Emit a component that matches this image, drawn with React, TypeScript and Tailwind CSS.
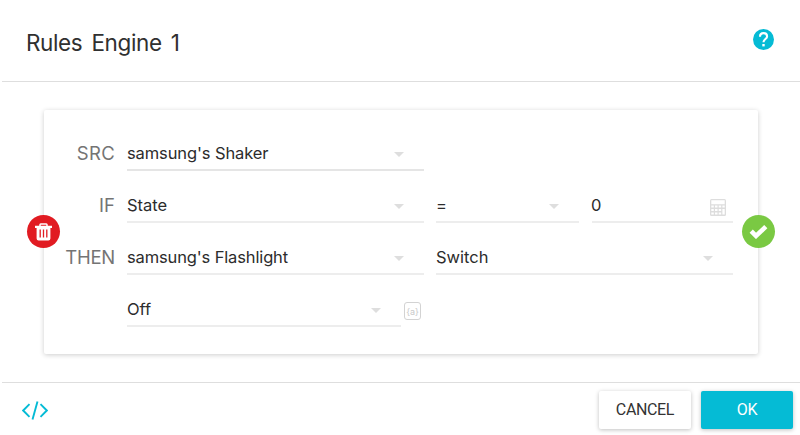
import type { ReactNode } from 'react';

type FieldProps = { text: string; width: string; arrow?: string; tracking?: string; line?: string; children?: ReactNode };

function Field({ text, width, arrow, tracking = '', line = 'border-[#ededed]', children }: FieldProps) {
  return (
    <div className={`flex h-[35px] items-center justify-between border-b-2 ${line} ${width}`}>
      <span className={`text-[16.5px] leading-[20px] whitespace-nowrap text-[#2c2c2c] ${tracking}`}>{text}</span>
      {arrow && (
        <svg className={`mt-[3px] h-[5px] w-[10px] shrink-0 ${arrow}`} viewBox="0 0 10 5" fill="#dedede">
          <path d="M0 0h10L5 5z" />
        </svg>
      )}
      {children}
    </div>
  );
}

function Label({ children, tracking = '' }: { children?: ReactNode; tracking?: string }) {
  return (
    <div className={`mr-[12px] flex h-[33px] w-[71px] items-center justify-end text-[18.5px] leading-[20px] text-[#747474] ${tracking}`}>
      {children}
    </div>
  );
}

export default function App() {
  return (
    <div className="flex h-[435px] w-[800px] flex-col overflow-hidden bg-white pl-[2px] font-['Inter','Liberation_Sans',sans-serif]">
      <header className="flex h-[82px] shrink-0 items-center justify-between border-b border-[#dedede] pr-[26px] pb-px pl-[24px]">
        <h1 className="mt-[5px] text-[22.5px] leading-[28px] tracking-[-0.38px] [word-spacing:3.2px] text-[#303030]">Rules Engine 1</h1>
        <svg className="mb-[2px] size-[21px]" viewBox="0 0 21 21">
          <circle cx="10.5" cy="10.5" r="10.5" fill="#05bbd5" />
          <path d="M7 7.7C7 5.3 8.4 4.1 10.5 4.1s3.6 1.3 3.6 3.3c0 2.5-3.6 2.8-3.6 5.8" fill="none" stroke="#fff" strokeWidth="2.1" />
          <rect x="9.3" y="15" width="2.4" height="2.4" fill="#fff" />
        </svg>
      </header>

      <main className="h-[300px] shrink-0 pt-[28px] pl-[42px]">
        <section className="relative flex h-[244px] w-[714px] flex-col gap-[17px] rounded-[2px] bg-white pt-[26px] shadow-[0_1px_5px_rgba(0,0,0,0.2)]">
          <div className="flex">
            <Label tracking="tracking-[0.3px]">SRC</Label>
            <Field text="samsung's Shaker" width="w-[297px]" arrow="mr-[20px]" line="border-[#e5e5e5]" tracking="tracking-[-0.11px]" />
          </div>
          <div className="flex">
            <Label>IF</Label>
            <Field text="State" width="w-[297px]" arrow="mr-[20px]" />
            <div className="w-[12px]" />
            <Field text="=" width="w-[143px]" arrow="mr-[20px]" />
            <div className="w-[13px]" />
            <Field text="0" width="w-[141px]" tracking="-ml-px">
              <svg className="mt-[5px] mr-[7px] h-[17px] w-[16px]" viewBox="0 0 16 17">
                <rect width="16" height="17" rx="1.5" fill="#dddddd" />
                <path fill="#fff" d="M1.3 1.3h13.4v4H1.3zM1.3 6.5h2.5v2H1.3zM5 6.5h2.5v2H5zM8.7 6.5h2.5v2H8.7zM12.4 6.5h2.3v2h-2.3zM1.3 10h2.5v2H1.3zM5 10h2.5v2H5zM8.7 10h2.5v2H8.7zM12.4 10h2.3v5.5h-2.3zM1.3 13.5h2.5v2H1.3zM5 13.5h2.5v2H5zM8.7 13.5h2.5v2H8.7z" />
              </svg>
            </Field>
          </div>
          <div className="flex">
            <Label tracking="tracking-[-0.25px]">THEN</Label>
            <Field text="samsung's Flashlight" width="w-[297px]" arrow="mr-[20px]" tracking="tracking-[-0.14px]" />
            <div className="w-[12px]" />
            <Field text="Switch" width="w-[297px]" arrow="mr-[20px]" />
          </div>
          <div className="flex">
            <Label />
            <Field text="Off" width="w-[274px]" arrow="mr-[20px]" />
            <div className="mt-[10px] ml-[3px] flex h-[18px] w-[17px] items-center justify-center rounded-[3px] border border-[#d3d3d3] text-[9px] leading-[9px] text-[#c9c9c9]">
              {'{a}'}
            </div>
          </div>

          <button className="absolute top-[105px] left-[-17px] flex size-[33px] items-center justify-center rounded-full bg-[#e11b22]" aria-label="Delete">
            <svg className="h-[18px] w-[17px]" viewBox="0 0 17 18">
              <path d="M5 3V1.7Q5 .9 5.8.9h5.4q.8 0 .8.8V3" fill="none" stroke="#fff" strokeWidth="1.5" />
              <path d="M0 2.8h17v2.3h-1.6v10.4q0 2-2 2H3.6q-2 0-2-2V5.1H0z" fill="#fff" />
              <path d="M5.2 6.5v8M8.5 6.5v8M11.8 6.5v8" stroke="#e11b22" strokeWidth="1.3" />
            </svg>
          </button>
          <button className="absolute top-[105px] left-[698px] flex size-[33px] items-center justify-center rounded-full bg-[#7ac943]" aria-label="Apply">
            <svg className="h-[15px] w-[19px]" viewBox="0 0 19 15">
              <path d="M2.2 7.2 7 11.9 16.8 2.6" fill="none" stroke="#fff" strokeWidth="4.6" />
            </svg>
          </button>
        </section>
      </main>

      <footer className="flex h-[53px] shrink-0 items-start border-t border-[#dedede] pt-[8px] pl-[20px]">
        <svg className="mt-[10px] h-[19px] w-[26px]" viewBox="0 0 26 19" fill="none" stroke="#05bbd5" strokeWidth="1.9">
          <path d="M7.5 3.2 1.2 9.5l6.3 6.3M18.5 3.2l6.3 6.3-6.3 6.3M15.5.5l-5 18" />
        </svg>
        <button className="ml-[551px] h-[38px] w-[92px] rounded-[2px] bg-white font-['Roboto',sans-serif] text-[16px] tracking-[-0.35px] text-[#333] shadow-[0_1px_4px_rgba(0,0,0,0.25)]">CANCEL</button>
        <button className="ml-[10px] h-[38px] w-[92px] rounded-[2px] bg-[#05bbd5] font-['Roboto',sans-serif] text-[16px] tracking-[-0.35px] text-white shadow-[0_1px_4px_rgba(0,0,0,0.25)]">OK</button>
      </footer>
    </div>
  );
}
